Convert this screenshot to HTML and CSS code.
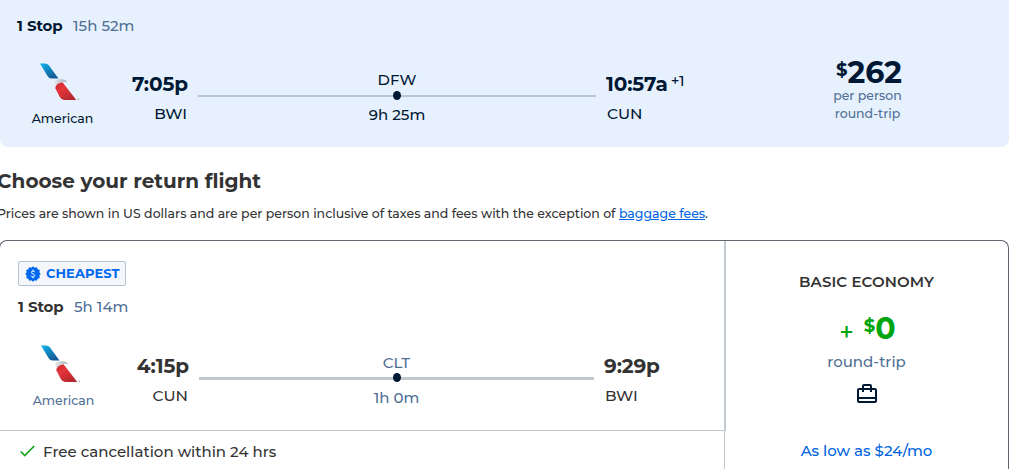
FILE: index.html
```
<!DOCTYPE html>
<html lang="en">
<head>
    <meta charset="UTF-8">
    <title>Choose your return flight</title>
    <link rel="stylesheet" href="styles.css">
</head>
<body>
    <svg class="defs" width="0" height="0">
        <defs>
            <linearGradient id="tailBlue" x1="0" y1="0" x2="0.6" y2="1">
                <stop offset="0" stop-color="#12b4ea"/>
                <stop offset="1" stop-color="#155a97"/>
            </linearGradient>
            <linearGradient id="tailRed" x1="0" y1="0" x2="0.7" y2="1">
                <stop offset="0" stop-color="#c8252e"/>
                <stop offset="0.4" stop-color="#e5353a"/>
                <stop offset="1" stop-color="#b4282e"/>
            </linearGradient>
            <linearGradient id="beak" x1="0" y1="0" x2="1" y2="0">
                <stop offset="0" stop-color="#e6e9ec"/>
                <stop offset="1" stop-color="#a3adb5"/>
            </linearGradient>
        </defs>
        <symbol id="american" viewBox="0 0 40 38">
            <path fill="url(#tailBlue)" d="M0 0.500H5Q7.500 0.500 9 2.500L18.500 15.500H11.500Q9 15.500 7.500 13Z"/>
            <path fill="url(#beak)" d="M14 18.500Q17 15.500 21 16Q26 16.500 27 19Q23 18.300 20 19.500Q17 21 15.500 23Q14.500 20.500 14 18.500Z"/>
            <path fill="url(#tailRed)" d="M15.200 25Q16 20.500 22.500 19.300L36.300 37H24Q21.500 37 19.800 34Z"/>
            <circle cx="38.300" cy="36.300" r="0.700" fill="#8d98a3"/>
        </symbol>
    </svg>

    <section class="outbound">
        <div class="flight">
            <div class="stops"><b>1 Stop</b><span>15h 52m</span></div>
            <div class="leg">
                <div class="airline">
                    <svg class="logo" width="40" height="38"><use href="#american"/></svg>
                    <span>American</span>
                </div>
                <div class="depart">
                    <div class="time">7:05p</div>
                    <div class="code">BWI</div>
                </div>
                <div class="route">
                    <span class="via">DFW</span>
                    <div class="line"><i class="dot"></i></div>
                    <span class="layover">9h 25m</span>
                </div>
                <div class="arrive">
                    <div class="time">10:57a<sup>+1</sup></div>
                    <div class="code">CUN</div>
                </div>
            </div>
        </div>
        <div class="price-box">
            <div class="price"><span class="currency">$</span><span class="amount">262</span></div>
            <div class="price-note">per person</div>
            <div class="price-note">round-trip</div>
        </div>
    </section>

    <section class="intro">
        <h2>Choose your return flight</h2>
        <p>Prices are shown in US dollars and are per person inclusive of taxes and fees with the exception of <a href="#">baggage fees</a>.</p>
    </section>

    <section class="return">
        <div class="details">
            <div class="flight">
                <div class="badge">
                    <svg width="16" height="16" viewBox="0 0 16 16">
                        <path fill="#0068ef" d="M8 0.300L9.700 1.700L11.800 1.200L12.700 3.200L14.800 4.100L14.300 6.300L15.700 8L14.300 9.700L14.800 11.900L12.700 12.800L11.800 14.800L9.700 14.300L8 15.700L6.300 14.300L4.200 14.800L3.300 12.800L1.200 11.900L1.700 9.700L0.300 8L1.700 6.300L1.200 4.100L3.300 3.200L4.200 1.200L6.300 1.700Z"/>
                        <path fill="none" stroke="#fff" stroke-width="1" d="M9.800 6.200C9.600 4.600 6.300 4.600 6.300 6.400C6.300 8.300 9.800 7.500 9.800 9.500C9.800 11.400 6.300 11.400 6.100 9.700M8 3.700V5.200M8 10.800V12.300"/>
                    </svg>
                    <span>CHEAPEST</span>
                </div>
                <div class="stops"><b>1 Stop</b><span>5h 14m</span></div>
                <div class="leg">
                    <div class="airline">
                        <svg class="logo" width="40" height="38"><use href="#american"/></svg>
                        <span>American</span>
                    </div>
                    <div class="depart">
                        <div class="time">4:15p</div>
                        <div class="code">CUN</div>
                    </div>
                    <div class="route">
                        <span class="via">CLT</span>
                        <div class="line"><i class="dot"></i></div>
                        <span class="layover">1h 0m</span>
                    </div>
                    <div class="arrive">
                        <div class="time">9:29p</div>
                        <div class="code">BWI</div>
                    </div>
                </div>
            </div>
            <div class="cancel">
                <svg width="15" height="12" viewBox="0 0 15 12"><path fill="none" stroke="#0fa31a" stroke-width="1.700" d="M0.700 6.500L4.800 10.500L14.200 1"/></svg>
                <span>Free cancellation within 24 hrs</span>
            </div>
        </div>
        <div class="fare">
            <div class="cabin">BASIC ECONOMY</div>
            <div class="price"><span class="plus">+</span><span class="currency">$</span><span class="amount">0</span></div>
            <div class="trip">round-trip</div>
            <svg class="bag" width="20" height="20" viewBox="0 0 20 20">
                <path fill="none" stroke="#001833" stroke-width="2" stroke-linejoin="round" d="M2 5H18Q19 5 19 6V17Q19 18 18 18H2Q1 18 1 17V6Q1 5 2 5ZM1 14H19M6 8V2Q6 1 7 1H13Q14 1 14 2V8"/>
            </svg>
            <a class="monthly" href="#">As low as $24/mo</a>
        </div>
    </section>
</body>
</html>
```
FILE: styles.css
```
* {
    box-sizing: border-box;
}

body {
    margin: 0;
    height: 469px;
    overflow: hidden;
    font-family: Montserrat, Inter, sans-serif;
    font-size: 15px;
    font-weight: 500;
    color: #333;
    background: #fff;
}

.defs {
    display: block;
}

.outbound {
    display: flex;
    height: 147px;
    background: #e7f1fe;
    border-radius: 0 0 8px 8px;
    color: #001833;
}

.flight {
    width: 725px;
    padding-left: 17px;
}

.outbound .flight {
    padding-top: 16px;
}

.stops {
    height: 20px;
    line-height: 20px;
    display: flex;
    gap: 10px;
}

.stops b {
    width: 46px;
    font-weight: 700;
    letter-spacing: -0.1px;
    white-space: nowrap;
}

.stops span {
    color: #4f6f95;
}

.leg {
    display: grid;
    grid-template-columns: 91px 70px 398px 120px;
    column-gap: 10px;
    margin-top: 26px;
}

.airline {
    display: flex;
    flex-direction: column;
    align-items: center;
    padding-top: 1px;
    font-size: 12.5px;
    line-height: 16px;
}

.logo {
    margin-right: 6px;
    margin-bottom: 10px;
}

.depart {
    padding-top: 9px;
    text-align: right;
}

.arrive {
    padding-top: 9px;
}

.time {
    font-size: 20px;
    font-weight: 700;
    line-height: 26px;
    letter-spacing: -0.1px;
    white-space: nowrap;
}

.time sup {
    margin-left: 3px;
    font-size: 15px;
    font-weight: 500;
    line-height: 0;
    vertical-align: 5px;
}

.code {
    margin-top: 7px;
    font-size: 15.3px;
    line-height: 20px;
    padding: 0 1px;
}

.route {
    display: flex;
    flex-direction: column;
    align-items: center;
    padding-top: 8px;
    line-height: 20px;
}

.line {
    display: flex;
    justify-content: center;
    align-items: flex-end;
    width: 100%;
    height: 2px;
    margin: 5px 0 8px;
    background: #b9c5d4;
}

.dot {
    flex: none;
    width: 8px;
    height: 9px;
    margin-bottom: -3px;
    border-radius: 50%;
    background: #001833;
}

.price-box {
    width: 285px;
    padding-top: 57px;
    text-align: center;
    color: #4f6f95;
}

.price {
    display: flex;
    justify-content: center;
    height: 30px;
    font-weight: 700;
    line-height: 32px;
}

.outbound .price {
    color: #001833;
    padding-left: 4px;
}

.currency {
    font-size: 18px;
    line-height: 27px;
}

.amount {
    font-size: 30px;
}

.price-note {
    padding-left: 1px;
    font-size: 12.5px;
    line-height: 18px;
}

.intro {
    margin-left: -3px;
}

.intro h2 {
    margin: 21px 0 0;
    font-size: 20px;
    line-height: 26px;
}

.intro p {
    margin: 11px 0 0;
    font-size: 12.5px;
    line-height: 18px;
    white-space: nowrap;
}

.intro a {
    color: #0064e0;
}

/* bottom edge stays open, the card continues below the fold */
.return {
    display: flex;
    height: 229px;
    margin-top: 17px;
    margin-left: -1px;
    border: 1px solid #626570;
    border-bottom: none;
    border-radius: 8px 8px 0 0;
}

.details {
    width: 725px;
}

.return .flight {
    height: 190px;
    padding-top: 20px;
    padding-left: 18px;
    border-right: 2px solid #c0c8d0;
    border-bottom: 1px solid #c0c8d0;
    width: 726px;
}

.badge {
    display: flex;
    align-items: center;
    width: 108px;
    height: 25px;
    margin-bottom: 11px;
    padding-left: 6px;
    gap: 5px;
    border: 1px solid #b4c3d4;
    border-radius: 2px;
    background: #f4f6f9;
    color: #0068ef;
    font-size: 13px;
    font-weight: 700;
    line-height: 22px;
    letter-spacing: 0.1px;
}

.badge span {
    padding-bottom: 1px;
}

.return .leg {
    grid-template-columns: 91px 70px 395px 120px;
    margin-top: 27px;
}

.return .airline,
.return .route {
    color: #4f6f95;
}

.return .line {
    height: 3px;
    background: #c0c8d0;
}

.return .dot {
    margin-bottom: -2px;
}

.return .via {
    padding-top: 1px;
    margin-bottom: -1px;
}

.cancel {
    display: flex;
    align-items: center;
    gap: 8px;
    height: 38px;
    padding-left: 20px;
    padding-top: 2px;
    border-right: 1px solid #c0c8d0;
}

.fare {
    display: flex;
    flex-direction: column;
    align-items: center;
    flex: 1;
    padding-top: 31px;
}

.cabin {
    font-weight: 600;
    line-height: 20px;
    letter-spacing: 0.1px;
}

.fare .price {
    height: 32px;
    margin-top: 21px;
    padding-left: 2px;
    color: #00a60e;
}

.fare .currency {
    line-height: 26px;
}

.plus {
    margin-right: 10px;
    font-size: 25px;
    font-weight: 500;
    line-height: 39px;
}

.trip {
    margin-top: 7px;
    line-height: 20px;
    color: #4f6f95;
}

.bag {
    margin-top: 12px;
}

.monthly {
    margin-top: 37px;
    line-height: 20px;
    color: #0064e0;
    text-decoration: none;
}
```
